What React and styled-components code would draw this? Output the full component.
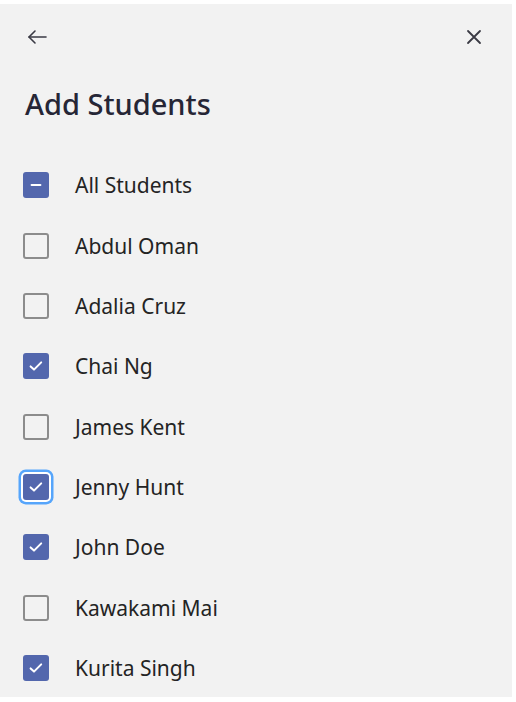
import React, { useState } from 'react';
import styled, { createGlobalStyle } from 'styled-components';

const GlobalStyle = createGlobalStyle`
    html, body {
        margin: 0;
        padding: 0;
        background: #ffffff;
    }
    body {
        font-family: 'Noto Sans', 'Open Sans', Arial, sans-serif;
    }
`;

const Panel = styled.section`
    box-sizing: border-box;
    width: 512px;
    height: 693px;
    margin-top: 4px;
    padding: 0 0 0 23px;
    background-color: #f2f2f2;
    overflow: hidden;
`;

const TopBar = styled.div`
    display: flex;
    align-items: center;
    justify-content: space-between;
    height: 66px;
    padding-right: 24px;
`;

const IconButton = styled.button`
    display: flex;
    align-items: center;
    justify-content: center;
    width: 28px;
    height: 28px;
    padding: 0;
    border: none;
    background: none;
    color: #3a3a44;
    cursor: pointer;
`;

const Title = styled.h1`
    margin: 14px 0 31px 2px;
    font-size: 29px;
    font-weight: 500;
    line-height: 40px;
    color: #262636;
`;

const List = styled.ul`
    display: flex;
    flex-direction: column;
    margin: 0;
    padding: 0;
    list-style: none;
`;

const Row = styled.li`
    display: flex;
    align-items: center;
    height: 60.35px;
    gap: 26px;
`;

const Box = styled.span`
    box-sizing: border-box;
    display: flex;
    align-items: center;
    justify-content: center;
    flex: none;
    width: 26px;
    height: 26px;
    border-radius: 3px;
    border: ${p => (p.$on ? 'none' : '2px solid #8c8c8c')};
    background: ${p => (p.$on ? '#5367ad' : 'transparent')};
    box-shadow: ${p => (p.$focus ? '0 0 0 2px #ffffff, 0 0 0 4.5px #56a5fb' : 'none')};
    cursor: pointer;
`;

const Label = styled.span`
    font-size: 21px;
    color: #242424;
`;

const ArrowLeft = () => (
    <svg width="22" height="16" viewBox="0 0 22 16" fill="none" stroke="currentColor" strokeWidth="1.6" strokeLinecap="round" strokeLinejoin="round">
        <path d="M20 8H3" />
        <path d="M9 2L3 8l6 6" />
    </svg>
);

const Close = () => (
    <svg width="16" height="16" viewBox="0 0 16 16" fill="none" stroke="currentColor" strokeWidth="1.8" strokeLinecap="round">
        <path d="M2 2l12 12M14 2L2 14" />
    </svg>
);

const Check = () => (
    <svg width="16" height="16" viewBox="0 0 16 16" fill="none" stroke="#ffffff" strokeWidth="2" strokeLinecap="round" strokeLinejoin="round">
        <path d="M2.6 8.4l3.4 3.2 7.2-7.2" />
    </svg>
);

const Dash = () => (
    <svg width="16" height="16" viewBox="0 0 16 16" fill="none" stroke="#ffffff" strokeWidth="1.8" strokeLinecap="round">
        <path d="M3.5 8h9" />
    </svg>
);

const students = [
    { name: 'Abdul Oman', on: false },
    { name: 'Adalia Cruz', on: false },
    { name: 'Chai Ng', on: true },
    { name: 'James Kent', on: false },
    { name: 'Jenny Hunt', on: true, focus: true },
    { name: 'John Doe', on: true },
    { name: 'Kawakami Mai', on: false },
    { name: 'Kurita Singh', on: true },
];

const App = () => {
    const [list, setList] = useState(students);

    const toggle = idx => {
        setList(list.map((s, i) => (i === idx ? { ...s, on: !s.on } : s)));
    };

    return (
        <>
            <GlobalStyle />
            <Panel>
                <TopBar>
                    <IconButton aria-label="Back">
                        <ArrowLeft />
                    </IconButton>
                    <IconButton aria-label="Close">
                        <Close />
                    </IconButton>
                </TopBar>
                <Title>Add Students</Title>
                <List>
                    <Row>
                        <Box $on>
                            <Dash />
                        </Box>
                        <Label>All Students</Label>
                    </Row>
                    {list.map((s, i) => (
                        <Row key={s.name} onClick={() => toggle(i)}>
                            <Box $on={s.on} $focus={s.focus}>
                                {s.on && <Check />}
                            </Box>
                            <Label>{s.name}</Label>
                        </Row>
                    ))}
                </List>
            </Panel>
        </>
    );
};

export default App;
